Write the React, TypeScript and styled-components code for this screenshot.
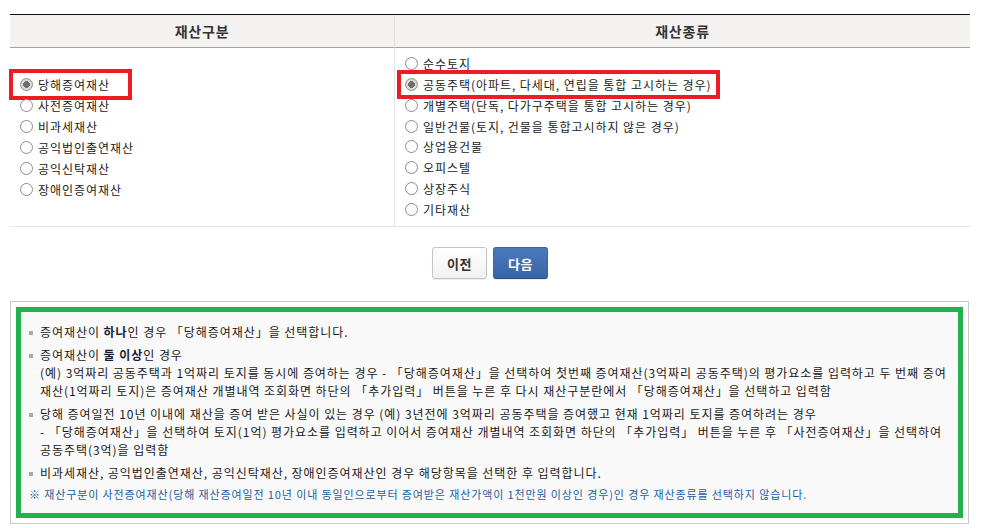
import React from "react";
import styled, { createGlobalStyle } from "styled-components";

const GlobalStyle = createGlobalStyle`
  body {
    margin: 0;
    background: #fff;
    font-family: "Noto Sans CJK KR", "Noto Sans", sans-serif;
    color: #222;
  }
`;

const assetTypes = [
  "당해증여재산",
  "사전증여재산",
  "비과세재산",
  "공익법인출연재산",
  "공익신탁재산",
  "장애인증여재산",
];

const assetKinds = [
  "순수토지",
  "공동주택(아파트, 다세대, 연립을 통합 고시하는 경우)",
  "개별주택(단독, 다가구주택을 통합 고시하는 경우)",
  "일반건물(토지, 건물을 통합고시하지 않은 경우)",
  "상업용건물",
  "오피스텔",
  "상장주식",
  "기타재산",
];

export default function App() {
  return (
    <>
      <GlobalStyle />
      <Page>
        <Table>
          <HeadCell $divider>재산구분</HeadCell>
          <HeadCell>재산종류</HeadCell>
          <BodyCell $divider $middle>
            {assetTypes.map((label, index) => (
              <OptionRow key={label}>
                {index === 0 && <Highlight $left={-11} $top={-16} $width={123} $height={31} />}
                <Radio $checked={index === 0} />
                <OptionText>{label}</OptionText>
              </OptionRow>
            ))}
          </BodyCell>
          <BodyCell>
            {assetKinds.map((label, index) => (
              <OptionRow key={label}>
                {index === 1 && <Highlight $left={-8} $top={-14} $width={323} $height={29} />}
                <Radio $checked={index === 1} />
                <OptionText>{label}</OptionText>
              </OptionRow>
            ))}
          </BodyCell>
        </Table>

        <ButtonBar>
          <PrevButton>이전</PrevButton>
          <NextButton>다음</NextButton>
        </ButtonBar>

        <HelpBox>
          <HelpInner>
            <HelpItem>
              <Bullet />
              <HelpText>
                증여재산이 <Strong>하나</Strong>인 경우 「당해증여재산」을 선택합니다.
              </HelpText>
            </HelpItem>
            <HelpItem>
              <Bullet />
              <HelpText>
                증여재산이 <Strong>둘 이상</Strong>인 경우
                <br />
                (예) 3억짜리 공동주택과 1억짜리 토지를 동시에 증여하는 경우 - 「당해증여재산」을 선택하여 첫번째 증여재산(3억짜리 공동주택)의 평가요소를 입력하고 두 번째 증여
                <br />
                재산(1억짜리 토지)은 증여재산 개별내역 조회화면 하단의 「추가입력」 버튼을 누른 후 다시 재산구분란에서 「당해증여재산」을 선택하고 입력함
              </HelpText>
            </HelpItem>
            <HelpItem>
              <Bullet />
              <HelpText>
                당해 증여일전 10년 이내에 재산을 증여 받은 사실이 있는 경우 (예) 3년전에 3억짜리 공동주택을 증여했고 현재 1억짜리 토지를 증여하려는 경우
                <br />
                - 「당해증여재산」을 선택하여 토지(1억) 평가요소를 입력하고 이어서 증여재산 개별내역 조회화면 하단의 「추가입력」 버튼을 누른 후 「사전증여재산」을 선택하여
                <br />
                공동주택(3억)을 입력함
              </HelpText>
            </HelpItem>
            <HelpItem $last>
              <Bullet />
              <HelpText>
                비과세재산, 공익법인출연재산, 공익신탁재산, 장애인증여재산인 경우 해당항목을 선택한 후 입력합니다.
              </HelpText>
            </HelpItem>
            <Notice>
              ※ 재산구분이 사전증여재산(당해 재산증여일전 10년 이내 동일인으로부터 증여받은 재산가액이 1천만원 이상인 경우)인 경우 재산종류를 선택하지 않습니다.
            </Notice>
          </HelpInner>
        </HelpBox>
      </Page>
    </>
  );
}

const Page = styled.div`
  width: 960px;
  padding: 14px 0 0 10px;
`;

const Table = styled.div`
  display: grid;
  grid-template-columns: 385px 1fr;
  border-top: 1px solid #111;
`;

const HeadCell = styled.div<{ $divider?: boolean }>`
  height: 32px;
  display: flex;
  align-items: center;
  justify-content: center;
  background: #f3f2f1;
  border-bottom: 1px solid #a3a3a3;
  border-right: ${(p) => (p.$divider ? "1px solid #e2e2e2" : "none")};
  font-size: 14px;
  font-weight: 700;
  letter-spacing: 0.8px;
  color: #333;
`;

const BodyCell = styled.div<{ $divider?: boolean; $middle?: boolean }>`
  height: 179px;
  box-sizing: border-box;
  display: flex;
  flex-direction: column;
  justify-content: ${(p) => (p.$middle ? "center" : "flex-start")};
  padding: ${(p) => (p.$middle ? "0 0 0 10px" : "5px 0 6px 10px")};
  border-bottom: 1px solid #e6e6e6;
  border-right: ${(p) => (p.$divider ? "1px solid #e6e6e6" : "none")};
  background: #fff;
`;

const OptionRow = styled.div`
  position: relative;
  height: 21px;
  display: flex;
  align-items: center;
  gap: 5px;
`;

const Radio = styled.span<{ $checked?: boolean }>`
  width: 13px;
  height: 13px;
  box-sizing: border-box;
  border-radius: 50%;
  border: 1px solid #8d8d8d;
  background: ${(p) =>
    p.$checked
      ? "radial-gradient(circle, #6e6e6e 0 3.2px, #d9d9d9 3.6px 100%)"
      : "#fff"};
  flex-shrink: 0;
`;

const OptionText = styled.span`
  font-size: 12px;
  letter-spacing: 0.95px;
  color: #222;
  white-space: nowrap;
`;

const Highlight = styled.span<{ $left: number; $top: number; $width: number; $height: number }>`
  position: absolute;
  left: ${(p) => p.$left}px;
  top: calc(50% + ${(p) => p.$top}px);
  width: ${(p) => p.$width}px;
  height: ${(p) => p.$height}px;
  box-sizing: border-box;
  border: 4px solid #ed1c24;
  pointer-events: none;
`;

const ButtonBar = styled.div`
  display: flex;
  justify-content: center;
  gap: 6px;
  padding: 20px 0 22px;
`;

const PrevButton = styled.button`
  width: 55px;
  height: 32px;
  border: 1px solid #c3c3c3;
  border-radius: 3px;
  background: linear-gradient(#ffffff, #f1f1f1);
  box-shadow: 0 1px 1px rgba(0, 0, 0, 0.08);
  font-family: inherit;
  font-size: 13px;
  font-weight: 700;
  letter-spacing: 0.5px;
  color: #333;
`;

const NextButton = styled(PrevButton)`
  border-color: #3a649e;
  border-bottom-color: #284a7a;
  background: linear-gradient(#4a79bd, #3865a7);
  color: #fff;
`;

const HelpBox = styled.div`
  width: 959px;
  box-sizing: border-box;
  border: 1px solid #c9c9c9;
  padding: 5px;
  background: #fff;
`;

const HelpInner = styled.div`
  border: 5px solid #22b14c;
  background: #f9f9f9;
  padding: 11px 8px 10px;
  font-size: 12px;
  line-height: 18px;
  color: #1a1a1a;
`;

const HelpItem = styled.div<{ $last?: boolean }>`
  display: flex;
  align-items: flex-start;
  margin-bottom: ${(p) => (p.$last ? "3px" : "5px")};
`;

const Bullet = styled.span`
  width: 4px;
  height: 4px;
  margin: 8px 7px 0 0;
  background: #a9a9a9;
  flex-shrink: 0;
`;

const HelpText = styled.div`
  white-space: nowrap;
  letter-spacing: 0.95px;
`;

const Strong = styled.b`
  color: #1b1b3a;
`;

const Notice = styled.div`
  font-size: 11px;
  letter-spacing: 0.88px;
  color: #1a5fa5;
  white-space: nowrap;
`;
